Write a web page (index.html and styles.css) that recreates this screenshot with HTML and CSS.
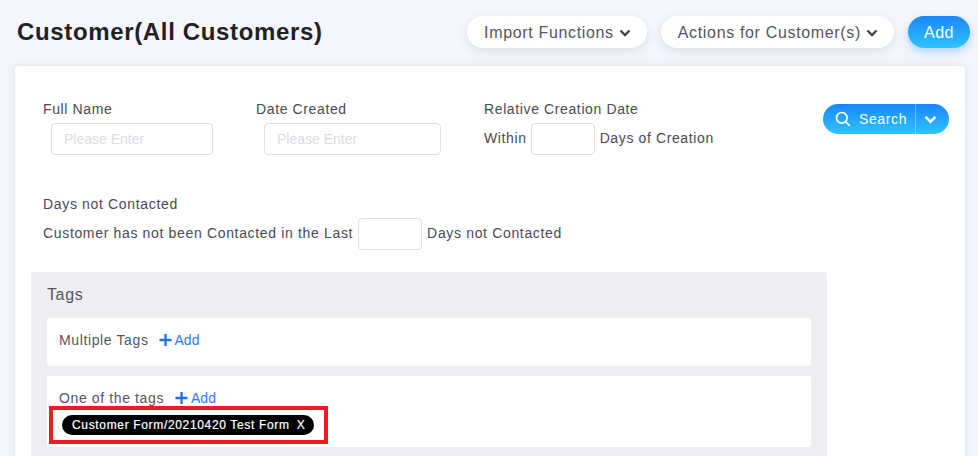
FILE: index.html
```html
<!DOCTYPE html>
<html lang="en">
<head>
<meta charset="utf-8">
<title>Customer</title>
<link rel="stylesheet" href="styles.css">
</head>
<body>
<header class="top">
  <h1 class="title">Customer(All Customers)</h1>
  <div class="actions">
    <button class="pill">Import Functions<svg class="chev" viewBox="0 0 12 8"><path d="M1.500 1.500 6 6l4.500-4.500"/></svg></button>
    <button class="pill">Actions for Customer(s)<svg class="chev" viewBox="0 0 12 8"><path d="M1.500 1.500 6 6l4.500-4.500"/></svg></button>
    <button class="add">Add</button>
  </div>
</header>
<main class="card">
  <div class="filters">
    <div class="field name-field">
      <label class="label">Full Name</label>
      <input class="input input-name" placeholder="Please Enter">
    </div>
    <div class="field date-field">
      <label class="label">Date Created</label>
      <input class="input input-date" placeholder="Please Enter">
    </div>
    <div class="field rel-field">
      <label class="label">Relative Creation Date</label>
      <div class="inline"><span>Within</span><input class="input small"><span>Days of Creation</span></div>
    </div>
    <div class="search">
      <span class="search-main"><svg class="glass" viewBox="0 0 16 16"><circle cx="6.800" cy="6.800" r="5.300"/><path d="m10.800 10.800 4 4"/></svg>Search</span>
      <span class="search-drop"><svg class="chev-w" viewBox="0 0 12 8"><path d="M1.500 1.500 6 6l4.500-4.500"/></svg></span>
    </div>
  </div>
  <div class="contact">
    <label class="label">Days not Contacted</label>
    <div class="inline"><span>Customer has not been Contacted in the Last</span><input class="input small"><span>Days not Contacted</span></div>
  </div>
  <section class="tags">
    <h2 class="tags-title">Tags</h2>
    <div class="tag-box">
      <div class="tag-row"><span>Multiple Tags</span><a class="tag-add"><svg class="plus" viewBox="0 0 12 12"><path d="M6 0v12M0 6h12"/></svg>Add</a></div>
    </div>
    <div class="tag-box second">
      <div class="tag-row"><span>One of the tags</span><a class="tag-add"><svg class="plus" viewBox="0 0 12 12"><path d="M6 0v12M0 6h12"/></svg>Add</a></div>
      <div class="mark"><span class="chip">Customer Form/20210420 Test Form<span class="chip-x">X</span></span></div>
    </div>
  </section>
</main>
</body>
</html>
```
FILE: styles.css
```css
* { box-sizing: border-box; }
html, body { margin: 0; height: 456px; overflow: hidden; }
body {
  background: #f5f6fb;
  font-family: "Liberation Sans", Arial, sans-serif;
  font-size: 14px;
  color: #4a4a55;
  letter-spacing: 0.62px;
  padding: 0 13px 0 15px;
}
.top { display: flex; justify-content: space-between; align-items: flex-start; height: 66px; padding-top: 16px; }
.title { margin: 1px 0 0 2px; font-size: 24px; line-height: 30px; font-weight: 700; color: #222226; letter-spacing: 0.65px; }
.actions { display: flex; gap: 14px; margin-right: -5px; }
.pill, .add {
  height: 32px; border: 0; border-radius: 16px; font: inherit; padding: 1px 0 0;
  display: flex; align-items: center; justify-content: center;
}
.pill { font-size: 16px; letter-spacing: 0.66px; background: #fff; color: #55555f; padding: 1px 16px 0 17px; box-shadow: 0 3px 10px rgba(90, 100, 130, .16); gap: 5px; }
.chev { width: 12px; height: 8px; fill: none; stroke: #3f3f48; stroke-width: 2.300; }
.add { width: 62px; font-size: 16px; letter-spacing: 0.5px; color: #fff; background: linear-gradient(#1a86fb, #2fc4ff); box-shadow: 0 4px 10px rgba(40, 150, 255, .35); }
.card {
  background: #fff; border-radius: 3px; height: 480px; width: 950px;
  padding: 33px 16px 0 16px;
  box-shadow: 0 0 10px rgba(90, 100, 130, .14);
}
.filters { display: flex; height: 89px; align-items: flex-start; }
.label { display: block; margin-left: 12px; line-height: 20px; height: 20px; }
.field { display: flex; flex-direction: column; }
.name-field { width: 213px; }
.name-field .input, .date-field .input { margin-top: 4px; margin-left: 20px; }
.date-field { width: 228px; }
.rel-field { width: 351px; }
.input {
  height: 32px; border: 1px solid #dcdfe6; border-radius: 4px; background: #fff; padding: 0 12px;
  font: inherit; letter-spacing: 0; outline: 0;
}
.input::placeholder { color: #dcdcdf; opacity: 1; }
.input-name { width: 162px; }
.input-date { width: 177px; }
.small { width: 64px; margin: 0 5px; }
.rel-field .small { margin-left: 4px; }
.inline { display: flex; align-items: center; margin-left: 12px; margin-top: 4px; white-space: nowrap; }
.inline span { margin-top: -2px; }
.search {
  display: flex; align-items: center; height: 30px; width: 126px; margin-top: 5px; border-radius: 15px; color: #fff; font-size: 14px;
  background: linear-gradient(#1a86fb, #2fc4ff);
}
.search-main { display: flex; align-items: center; gap: 8px; padding-left: 12px; width: 92px; white-space: nowrap; }
.glass { width: 16px; height: 16px; fill: none; stroke: #fff; stroke-width: 1.700; flex: none; }
.search-drop { flex: 1; height: 30px; border-left: 1px solid rgba(255, 255, 255, .35); display: flex; align-items: center; justify-content: center; padding-right: 4px; }
.chev-w { width: 13px; height: 9px; fill: none; stroke: #fff; stroke-width: 2.300; }
.contact { height: 84px; padding-top: 6px; letter-spacing: 0.66px; }
.contact .inline { margin-top: 4px; }
.tags { width: 796px; height: 260px; background: #eeeef1; border-radius: 3px; padding: 12px 16px; }
.tags-title { margin: 0 0 13px; font-size: 16px; font-weight: 400; line-height: 21px; color: #55555f; }
.tag-box { background: #fff; border-radius: 3px; height: 48px; padding: 12px 12px; margin-bottom: 10px; }
.tag-box.second { height: 71px; padding: 12px 2px 0 2px; }
.tag-row { display: flex; align-items: center; height: 20px; gap: 10px; color: #55555f; }
.second .tag-row { padding-left: 10px; gap: 11px; }
.tag-add { display: flex; align-items: center; gap: 3px; color: #2a7cf5; letter-spacing: 0; }
.plus { width: 13px; height: 12px; fill: none; stroke: #1e6fe8; stroke-width: 2.300; }
.mark { width: 279px; height: 38px; border: 4px solid #ec1c24; margin-top: -2px; padding: 5px 9px; }
.chip {
  display: inline-flex; align-items: center; height: 20px; padding: 0 9px 0 10px; border-radius: 10px;
  background: #000; color: #fff; font-size: 12px; letter-spacing: 0.66px; white-space: nowrap; -webkit-text-stroke: 0.2px #fff;
}
.chip-x { margin-left: 7px; font-size: 12px; }
```
